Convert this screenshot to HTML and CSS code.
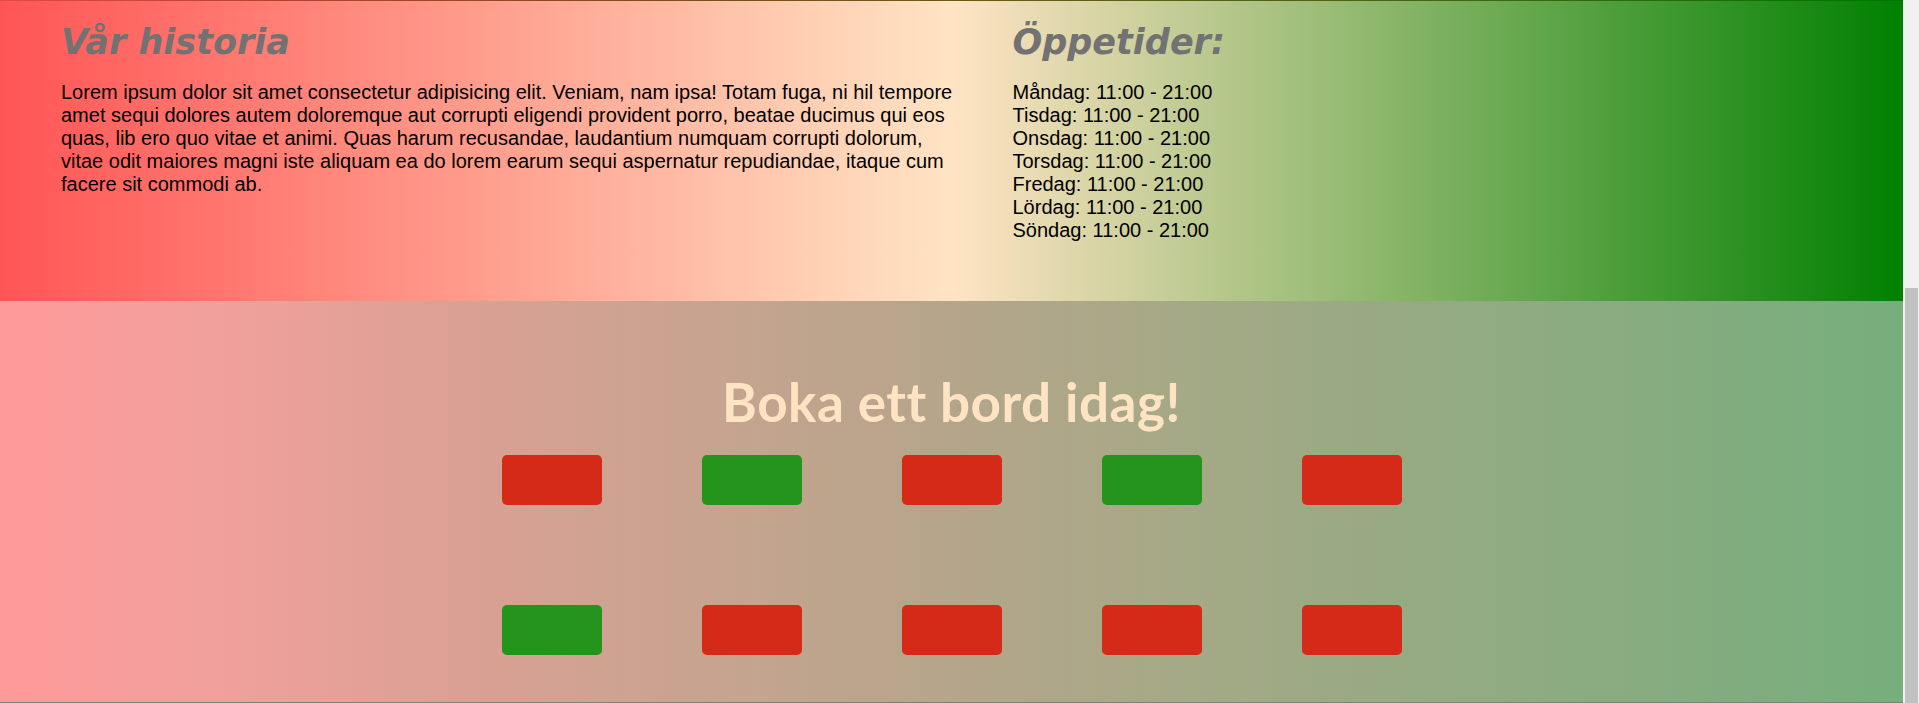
FILE: index.html
```html
<!DOCTYPE html>
<html lang="sv">
<head>
<meta charset="utf-8">
<title>Restaurang</title>
<link rel="stylesheet" href="styles.css">
</head>
<body>
<div class="page">
  <div class="topline"></div>
  <section class="info">
    <div class="col story">
      <h1 class="info-title">Vår historia</h1>
      <p class="info-text">Lorem ipsum dolor sit amet consectetur adipisicing elit. Veniam, nam ipsa! Totam fuga, ni hil tempore amet sequi dolores autem doloremque aut corrupti eligendi provident porro, beatae ducimus qui eos quas, lib ero quo vitae et animi. Quas harum recusandae, laudantium numquam corrupti dolorum, vitae odit maiores magni iste aliquam ea do lorem earum sequi aspernatur repudiandae, itaque cum facere sit commodi ab.</p>
    </div>
    <div class="col hours">
      <h1 class="info-title">Öppetider:</h1>
      <p class="info-text">Måndag: 11:00 - 21:00<br>Tisdag: 11:00 - 21:00<br>Onsdag: 11:00 - 21:00<br>Torsdag: 11:00 - 21:00<br>Fredag: 11:00 - 21:00<br>Lördag: 11:00 - 21:00<br>Söndag: 11:00 - 21:00</p>
    </div>
  </section>
  <section class="booking">
    <h2 class="booking-title">Boka ett bord idag!</h2>
    <div class="tables">
      <div class="table taken"></div>
      <div class="table free"></div>
      <div class="table taken"></div>
      <div class="table free"></div>
      <div class="table taken"></div>
      <div class="table free"></div>
      <div class="table taken"></div>
      <div class="table taken"></div>
      <div class="table taken"></div>
      <div class="table taken"></div>
    </div>
  </section>
  <div class="bottomline"></div>
</div>
<div class="scrollbar"><div class="scrollbar-thumb"></div></div>
</body>
</html>
```
FILE: styles.css
```css
html, body {
  height: 100%;
}

body {
  margin: 0;
  display: flex;
  overflow: hidden;
  font-family: "Liberation Sans", Arial, sans-serif;
}

.page {
  flex: 1;
  min-width: 0;
}

.scrollbar {
  width: 16px;
  flex: none;
  box-sizing: border-box;
  padding: 288px 1px 0 2px;
  display: flex;
  flex-direction: column;
  background: #f1f1f1;
}

.scrollbar-thumb {
  flex: 1;
  background: #c1c1c1;
}

.topline {
  height: 1px;
  background: linear-gradient(to right, #e04a4a 0%, #b0442c 15%, #7a4e18 35%, #6b5a10 50%, #4a6410 75%, #007400 100%);
}

.info {
  height: 300px;
  display: flex;
  background: linear-gradient(to right, #ff5555 0%, #ffe4c4 50%, #008000 100%);
}

.col {
  width: 50%;
  box-sizing: border-box;
  padding-left: 61px;
}

.info-title {
  margin: 21px 0 18px 0;
  font-family: "DejaVu Sans", Verdana, sans-serif;
  font-size: 35px;
  font-weight: bold;
  font-style: italic;
  line-height: 41px;
  color: #727272;
}

.info-text {
  margin: 0;
  font-size: 20px;
  line-height: 23px;
  color: #000;
}

.story .info-text {
  margin-right: -14px;
}

.booking {
  height: 401px;
  box-sizing: border-box;
  padding-top: 71px;
  display: flex;
  flex-direction: column;
  align-items: center;
  background: linear-gradient(to right, #ff9a9a 0%, #f0a09b 12%, #d9a093 25%, #c6a48f 38%, #b5a58a 50%, #a5a986 62%, #95aa82 75%, #85ac80 88%, #76ae7c 100%);
}

.booking-title {
  margin: 0 0 23px 0;
  font-family: Lato, "Open Sans", sans-serif;
  font-size: 53px;
  font-weight: bold;
  letter-spacing: 0.5px;
  line-height: 60px;
  color: #ffe4c4;
}

.tables {
  display: grid;
  grid-template-columns: repeat(5, 100px);
  grid-auto-rows: 50px;
  column-gap: 100px;
  row-gap: 100px;
}

.table {
  border-radius: 5px;
}

.taken {
  background: #d42a17;
}

.free {
  background: #24941c;
}

.bottomline {
  height: 1px;
  background: #7f7f7f;
}
```
